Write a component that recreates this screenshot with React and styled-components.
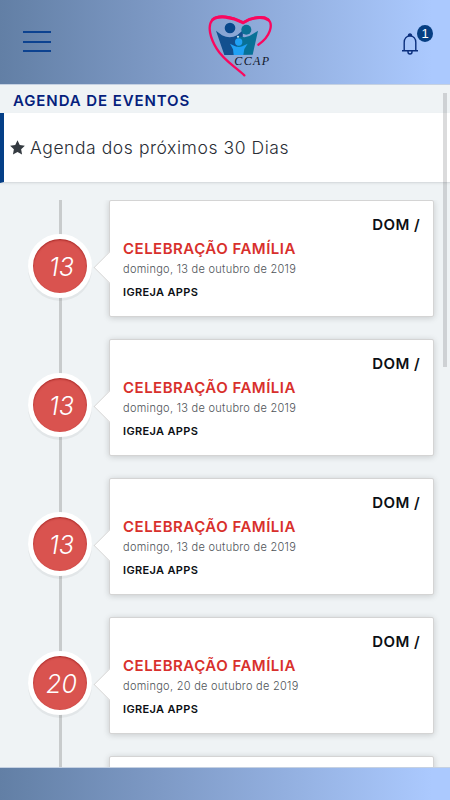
import React from 'react'
import styled, { createGlobalStyle } from 'styled-components'

const GlobalStyle = createGlobalStyle`
* {
    box-sizing: border-box;
}
body {
    margin: 0;
    background-color: #eff3f5;
    font-family: Inter, "Open Sans", sans-serif;
}
`
const Screen = styled.div`
position: relative;
display: flex;
flex-direction: column;
height: 800px;
overflow: hidden;
background-color: #eff3f5;
`
const TopBar = styled.header`
display: grid;
grid-template-columns: 1fr 80px 1fr;
align-items: center;
flex: none;
height: 85px;
padding: 0 15px 0 45px;
background: linear-gradient(to right, #627fa5, #7e9ac6 36%, #abc9fe 96%);
border-bottom: 1px solid #c5d1e2;
`
const MenuButton = styled.button`
display: flex;
flex-direction: column;
justify-content: space-between;
width: 28px;
height: 21px;
margin: -1px 0 0 -22px;
padding: 0;
border: none;
background: none;
`
const MenuLine = styled.span`
height: 2px;
background-color: #0c4290;
`
const Logo = styled.svg`
width: 80px;
height: 80px;
margin-top: 4px;
`
const LogoText = styled.text`
font-family: "Liberation Serif", serif;
font-style: italic;
font-size: 36px;
fill: #10162a;
`
const BellButton = styled.button`
position: relative;
justify-self: end;
width: 34px;
height: 34px;
padding: 0;
margin-top: -1px;
border: none;
background: none;
`
const BellIcon = styled.svg`
position: absolute;
left: 0;
top: 8px;
width: 18px;
height: 24px;
`
const Badge = styled.span`
position: absolute;
left: 16px;
top: 0;
width: 16px;
height: 17px;
border-radius: 50%;
background-color: #063e82;
color: #fff;
font-size: 13px;
line-height: 17px;
text-align: center;
`
const PageTitle = styled.h1`
flex: none;
height: 28px;
margin: 0;
padding-left: 13px;
color: #061f7d;
font-size: 15px;
font-weight: 600;
line-height: 31px;
letter-spacing: 0.9px;
white-space: nowrap;
`
const Subtitle = styled.h2`
display: flex;
align-items: center;
flex: none;
gap: 5px;
height: 70px;
margin: 0;
padding: 0 0 1px 6px;
border-left: 4px solid #053f87;
border-bottom: 1px solid #d9dde0;
background-color: #fff;
box-shadow: 0 1px 2px rgb(0 0 0 / 6%);
color: #292d35;
font-size: 17.5px;
font-weight: 300;
letter-spacing: 0.57px;
white-space: nowrap;
`
const Star = styled.svg`
width: 15px;
height: 15px;
fill: #343a40;
`
const Timeline = styled.main`
flex: 1;
min-height: 0;
margin-top: 17px;
overflow: hidden;
background: linear-gradient(#c8cbcc, #c8cbcc) 59px 0 / 3px 100% no-repeat;
`
const EventRow = styled.article`
display: flex;
align-items: center;
height: 117px;
margin-bottom: 22px;
padding-left: 28px;
`
const DayCircle = styled.div`
display: flex;
align-items: center;
justify-content: center;
width: 64px;
height: 64px;
margin: 15px 17px 0 0;
padding: 1px 0 0 3px;
border: 5px solid #fff;
border-radius: 50%;
background-color: #d9534f;
box-shadow: 0 3px 0 rgb(0 0 0 / 5%), inset 0 1px 2px rgb(120 0 0 / 55%);
color: #fff;
font-size: 25px;
font-style: italic;
font-weight: 300;
`
const Card = styled.div`
position: relative;
width: 325px;
height: 117px;
padding: 14px 13px;
border: 1px solid #d4d4d4;
border-radius: 2px;
background-color: #fff;
box-shadow: 0 1px 6px rgb(0 0 0 / 17%);
white-space: nowrap;
`
const Pointer = styled.span`
position: absolute;
left: -12px;
top: 55px;
width: 23px;
height: 23px;
border: solid #d4d4d4;
border-width: 0 0 1px 1px;
background-color: #fff;
clip-path: polygon(0 0, 6% 0, 100% 94%, 100% 100%, 0 100%);
transform: rotate(45deg);
`
const Weekday = styled.p`
margin: 0;
color: #0c0f14;
font-size: 15px;
font-weight: 600;
line-height: 19px;
letter-spacing: 0.4px;
text-align: right;
`
const EventTitle = styled.h3`
margin: 5px 0 0;
color: #d8302c;
font-size: 15px;
font-weight: 600;
line-height: 20px;
letter-spacing: 0.5px;
`
const EventDate = styled.p`
margin: 2px 0 0;
color: #4e5358;
font-size: 11px;
font-weight: 300;
line-height: 16px;
letter-spacing: 0.28px;
`
const Place = styled.p`
margin: 7px 0 0;
color: #0c0f14;
font-size: 11px;
font-weight: 600;
line-height: 16px;
letter-spacing: 0.34px;
`
const BottomBar = styled.footer`
flex: none;
height: 33px;
border-top: 1px solid #c5d1e2;
background: linear-gradient(to right, #627fa5, #7e9ac6 36%, #abc9fe 96%);
`
const ScrollThumb = styled.div`
position: absolute;
right: 3px;
top: 93px;
width: 4px;
height: 274px;
background-color: rgb(90 90 95 / 22%);
`
// top edge of the next event, still below the fold
const NextCard = styled(Card)`
margin-left: 109px;
`

const events = [
    { day: 13, title: 'CELEBRAÇÃO FAMÍLIA', date: 'domingo, 13 de outubro de 2019' },
    { day: 13, title: 'CELEBRAÇÃO FAMÍLIA', date: 'domingo, 13 de outubro de 2019' },
    { day: 13, title: 'CELEBRAÇÃO FAMÍLIA', date: 'domingo, 13 de outubro de 2019' },
    { day: 20, title: 'CELEBRAÇÃO FAMÍLIA', date: 'domingo, 20 de outubro de 2019' },
]

const HeartLogo = () => (
    <Logo viewBox="0 0 240 240">
        <path d="M48 80 L66 94 Q90 106 111 94 L129 79 L126 153 L73 153 Z" fill="#12508f" />
        <path d="M111 94 Q138 107 157 91 L174 80 L158 152 L111 153 Z" fill="#087197" />
        <circle cx="90" cy="72" r="16" fill="#07478b" />
        <circle cx="139" cy="77" r="15" fill="#0b7196" />
        <path d="M90 119 L104 126 Q116 132 127 127 L143 119 L133 135 L130 153 L101 153 L99 136 Z" fill="#20a1f5" />
        <circle cx="116" cy="114" r="11" fill="#20a1f5" />
        <circle cx="114" cy="98" r="3" fill="#d6e3f5" />
        <path
            d="M133 214 C105 188 70 168 50 134 C31 103 21 66 37 48 C53 29 95 37 129 56 C148 44 186 32 204 46 C221 61 211 98 175 122"
            fill="none"
            stroke="#fa075e"
            strokeWidth="7"
            strokeLinecap="round"
            strokeLinejoin="round"
        />
        <path d="M38 47 C55 34 94 38 129 56 C158 38 190 37 204 47" fill="none" stroke="#fa075e" strokeWidth="9" strokeLinecap="round" />
        <LogoText x="103" y="182" textLength="104">CCAP</LogoText>
    </Logo>
)

export default function App() {
    return (
        <Screen>
            <GlobalStyle />

            <TopBar>
                <MenuButton aria-label="Menu">
                    <MenuLine />
                    <MenuLine />
                    <MenuLine />
                </MenuButton>
                <HeartLogo />
                <BellButton aria-label="Notificações">
                    <BellIcon viewBox="0 0 18 24" fill="none" stroke="#0b2f7d" strokeWidth="1.4">
                        <path d="M1 17.7 H17 M3.2 17 V9.5 C3.2 5.6 5.6 3 9 3 C12.4 3 14.8 5.6 14.8 9.5 V17" />
                        <path d="M7.5 3 Q7.5 1 9 1 Q10.5 1 10.5 3" fill="#0b2f7d" />
                        <path d="M7 18 V19 Q7 21 9 21 Q11 21 11 19 V18" />
                    </BellIcon>
                    <Badge>1</Badge>
                </BellButton>
            </TopBar>

            <PageTitle>AGENDA DE EVENTOS</PageTitle>
            <Subtitle>
                <Star viewBox="0 0 24 24">
                    <path d="M12 0.5 L15.6 8 L23.8 9.1 L17.8 14.8 L19.3 23 L12 19.1 L4.7 23 L6.2 14.8 L0.2 9.1 L8.4 8 Z" />
                </Star>
                Agenda dos próximos 30 Dias
            </Subtitle>

            <Timeline>
                {events.map((event, index) => (
                    <EventRow key={index}>
                        <DayCircle>{event.day}</DayCircle>
                        <Card>
                            <Pointer />
                            <Weekday>DOM /</Weekday>
                            <EventTitle>{event.title}</EventTitle>
                            <EventDate>{event.date}</EventDate>
                            <Place>IGREJA APPS</Place>
                        </Card>
                    </EventRow>
                ))}
                <NextCard />
            </Timeline>

            <BottomBar />
            <ScrollThumb />
        </Screen>
    )
}
